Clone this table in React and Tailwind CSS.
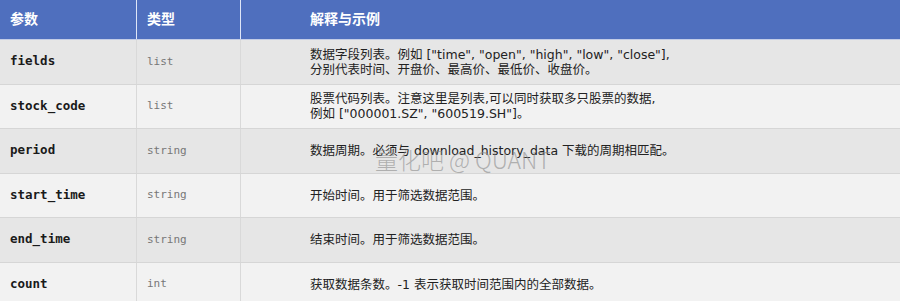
const rows = [
  {
    name: 'fields',
    type: 'list',
    desc: ['数据字段列表。例如 ["time", "open", "high", "low", "close"],', '分别代表时间、开盘价、最高价、最低价、收盘价。'],
  },
  {
    name: 'stock_code',
    type: 'list',
    desc: ['股票代码列表。注意这里是列表,可以同时获取多只股票的数据,', '例如 ["000001.SZ", "600519.SH"]。'],
  },
  { name: 'period', type: 'string', desc: ['数据周期。必须与 download_history_data 下载的周期相匹配。'] },
  { name: 'start_time', type: 'string', desc: ['开始时间。用于筛选数据范围。'] },
  { name: 'end_time', type: 'string', desc: ['结束时间。用于筛选数据范围。'] },
  { name: 'count', type: 'int', desc: ['获取数据条数。-1 表示获取时间范围内的全部数据。'] },
];

const sans = "font-['DejaVu_Sans','Noto_Sans_CJK_SC',sans-serif]";
const mono = "font-['DejaVu_Sans_Mono','Noto_Sans_CJK_SC',monospace]";

export default function App() {
  return (
    <div className={`relative h-[301px] w-[900px] overflow-hidden bg-[#f2f2f2] ${sans}`}>
      <div className="grid h-[40px] grid-cols-[137px_104px_1fr] border-b border-[#c3cce6] bg-[#4f6fbe] text-[14px] font-bold text-white">
        <div className="flex items-center border-r border-[#dfe6f7] pl-[10px]">参数</div>
        <div className="flex items-center border-r border-[#dfe6f7] pl-[10px]">类型</div>
        <div className="flex items-center pl-[69px]">解释与示例</div>
      </div>
      {rows.map((r, i) => (
        <div
          key={r.name}
          className={`grid h-[44.5px] grid-cols-[137px_104px_1fr] border-b border-[#d6d6d6] ${i % 2 === 0 ? 'bg-[#e6e6e6]' : 'bg-[#f2f2f2]'}`}
        >
          <div className={`flex items-center border-r border-[#d9d9d9] pl-[10px] text-[12.5px] font-bold text-[#1a1a1a] ${mono}`}>
            {r.name}
          </div>
          <div className={`flex items-center border-r border-[#d9d9d9] pl-[10px] text-[11px] text-[#777] ${mono}`}>
            {r.type}
          </div>
          <div className="flex flex-col justify-center pl-[69px] text-[12.5px] leading-[15px] text-[#222]">
            {r.desc.map((line) => (
              <div key={line}>{line}</div>
            ))}
          </div>
        </div>
      ))}
      <div className="pointer-events-none absolute left-[375px] top-[142px] text-[23px] font-light text-[#8a8a8a]/60 font-['Noto_Sans_CJK_SC',sans-serif]">
        量化吧 @ QUANT
      </div>
    </div>
  );
}
